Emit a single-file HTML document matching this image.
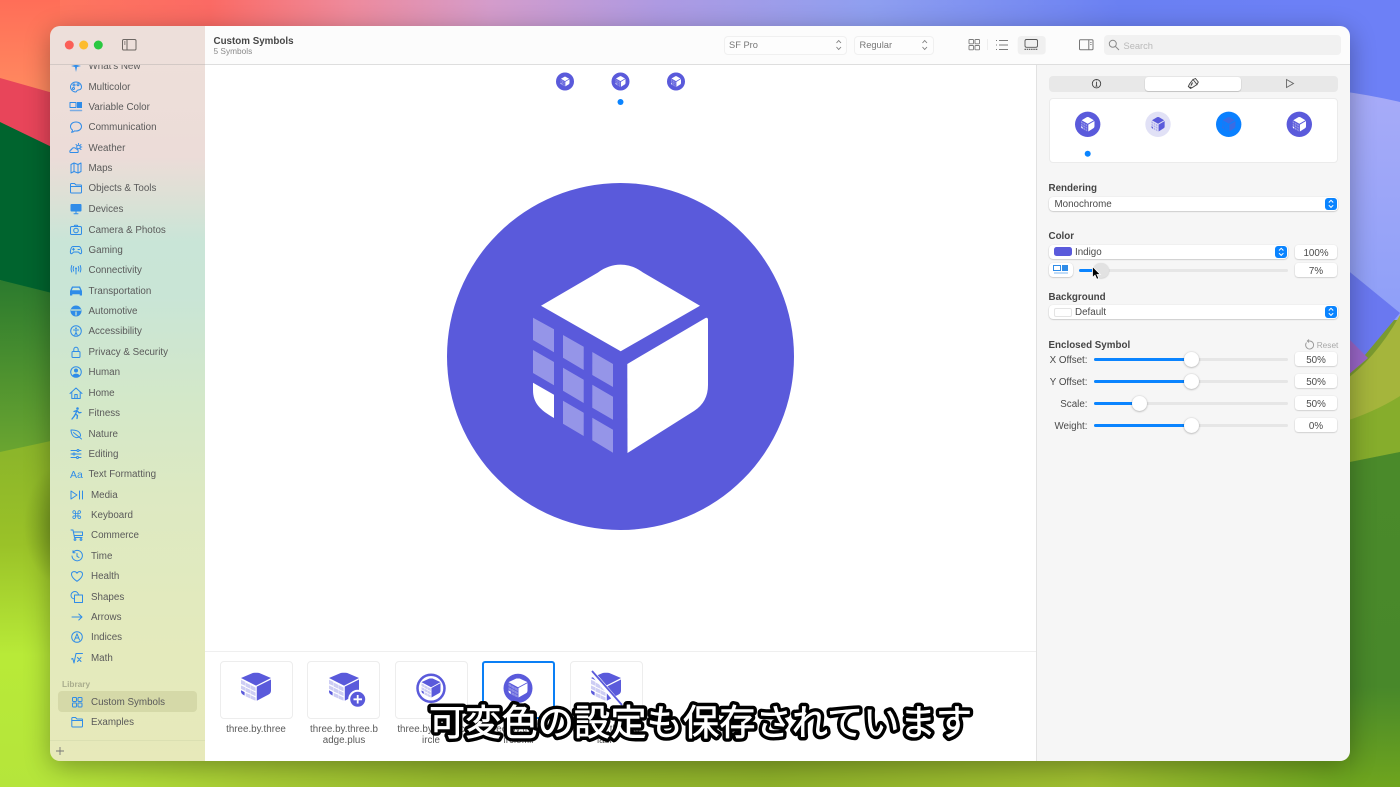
<!DOCTYPE html>
<html lang="ja"><head><meta charset="utf-8"><title>SF Symbols</title>
<style>
*{box-sizing:border-box}
html,body{margin:0;padding:0;width:1400px;height:787px;overflow:hidden;background:#7a9a30;font-family:"Liberation Sans","Noto Sans CJK JP",sans-serif}
.abs,.win div,.win span,.win svg{position:absolute}
.shadow{position:absolute;left:50px;top:26px;width:1300px;height:735px;border-radius:10px;box-shadow:0 6px 26px rgba(0,0,0,.32)}
.win{position:absolute;left:0;top:0;width:1400px;height:787px;clip-path:inset(26px 50px 26px 50px round 10px);font-size:9.8px;color:#4c4c4c;white-space:nowrap;filter:blur(.3px)}
.side{left:50px;top:26px;width:155px;height:735px;background:linear-gradient(180deg,#eee0da 0,#ecdcd8 130px,#dfe0d6 165px,#c9e5d7 215px,#c9e5d6 270px,#d4e8c8 380px,#dde9c2 470px,#e3eabd 600px,#e7e9ba 735px)}
.main{left:205px;top:26px;width:831px;height:735px;background:#fff}
.right{left:1036px;top:26px;width:314px;height:735px;background:#f6f6f6;border-left:1px solid #e2e2e2}
.head{left:205px;top:26px;width:1145px;height:39px;background:#fcfcfc;border-bottom:1px solid #dedede}
.shead{left:50px;top:26px;width:155px;height:39px;background:#eddfda;border-bottom:1px solid #d3c9c5}
.r{left:0;height:14px;width:205px;line-height:14px;color:#5a5a5a}
.r span{left:88.5px;top:1px}
.r.b span{left:91px}
.r svg{left:69px;top:0;width:14px;height:14px;fill:none;stroke:#2f8ce8;stroke-width:1;stroke-linecap:round;stroke-linejoin:round}
.r.b svg{left:70px}
.r svg .f{fill:#2f8ce8;stroke:none}
.lbl{font-weight:700;color:#454545;line-height:12px;left:1048.5px}
.pop{background:#fff;border-radius:4px;box-shadow:0 .5px 1.5px rgba(0,0,0,.28);height:14px;line-height:16px;color:#4a4a4a}
.blue{width:12px;height:12px;border-radius:3px;background:#0a84ff}
.fld{left:1295px;width:42px;height:14px;background:#fff;border-radius:3px;box-shadow:0 .5px 1.5px rgba(0,0,0,.25);text-align:center;line-height:17.5px;color:#4a4a4a}
.trk{height:3px;background:#e6e6e6;border-radius:2px}
.fil{height:3px;background:#0a84ff;border-radius:2px}
.th{width:15px;height:15px;border-radius:50%;background:#fff;box-shadow:0 .5px 2px rgba(0,0,0,.35)}
.rl{width:50px;text-align:right;left:1037.5px;line-height:12px;color:#4a4a4a}
.card{width:73px;height:58px;top:661px;border:1px solid #ededed;border-radius:4px;background:#fff}
.cap{width:90px;text-align:center;line-height:11.2px;color:#5a5a5a;top:723.5px;white-space:nowrap}
</style></head>
<body>
<svg class="abs" style="left:0;top:0" width="1400" height="787" viewBox="0 0 1400 787">
<defs>
<linearGradient id="top" x1="0" x2="1" y1="0" y2="0"><stop offset="0" stop-color="#ff7a5c"/><stop offset=".15" stop-color="#fb6a64"/><stop offset=".25" stop-color="#ee8a9c"/><stop offset=".35" stop-color="#d49ccb"/><stop offset=".47" stop-color="#ae9ae2"/><stop offset=".62" stop-color="#8f9ff0"/><stop offset=".8" stop-color="#6a80f2"/><stop offset="1" stop-color="#6d80f8"/></linearGradient>
<linearGradient id="org" x1="0" x2="0" y1="0" y2="1"><stop offset="0" stop-color="#ff6e58"/><stop offset="1" stop-color="#ff8c60"/></linearGradient>
<linearGradient id="mid" x1="0" x2="0" y1="0" y2="1"><stop offset="0" stop-color="#2b7a2e"/><stop offset="1" stop-color="#6aa530"/></linearGradient>
<linearGradient id="yg" x1="0" x2="0" y1="0" y2="1"><stop offset="0" stop-color="#8ab42a"/><stop offset=".3" stop-color="#9ac228"/><stop offset=".62" stop-color="#b8ea38"/><stop offset="1" stop-color="#b5e53b"/></linearGradient>
<linearGradient id="bot" x1="0" x2="1" y1="0" y2="0"><stop offset="0" stop-color="#b6e63a"/><stop offset=".15" stop-color="#a8cc34"/><stop offset=".3" stop-color="#98bb2e"/><stop offset=".55" stop-color="#8fb22a"/><stop offset=".8" stop-color="#a0bf30"/><stop offset="1" stop-color="#6ca51f"/></linearGradient>
<linearGradient id="per" x1="0" x2="0" y1="0" y2="1"><stop offset="0" stop-color="#a7abf8"/><stop offset="1" stop-color="#8e9ff8"/></linearGradient>
<linearGradient id="gr" x1="0" x2="0" y1="0" y2="1"><stop offset="0" stop-color="#4a8a2a"/><stop offset=".7" stop-color="#48882a"/><stop offset="1" stop-color="#6fa51e"/></linearGradient>
<radialGradient id="dk"><stop offset="0" stop-color="#6d8f1e" stop-opacity=".9"/><stop offset="1" stop-color="#6d8f1e" stop-opacity="0"/></radialGradient>
</defs>
<rect width="1400" height="100" fill="url(#top)"/>
<rect x="0" y="0" width="60" height="100" fill="url(#org)"/>
<rect x="0" y="440" width="100" height="347" fill="url(#yg)"/>
<ellipse cx="62" cy="525" rx="38" ry="60" fill="url(#dk)"/>
<polygon points="0,78 60,95 60,152 0,122" fill="#e8455a"/>
<polygon points="0,122 60,151 60,300 0,280" fill="#00642e"/>
<polygon points="0,280 60,295 60,439 0,452" fill="url(#mid)"/>
<rect x="1340" y="0" width="60" height="110" fill="#6d80f6"/>
<path d="M1340 91 Q1370 95 1400 102 V320 H1340Z" fill="url(#per)"/>
<polygon points="1340,264 1400,313 1340,385" fill="#6a78f0"/>
<polygon points="1340,330 1368,358 1340,382" fill="#9a66c8"/>
<path d="M1340 384 Q1375 360 1400 315 V400 L1340 425Z" fill="#a5b53c"/>
<path d="M1340 423 Q1375 412 1400 396 V452 L1340 464Z" fill="#86ad2c"/>
<path d="M1340 464 L1400 452 V787 H1340Z" fill="url(#gr)"/>
<rect x="60" y="755" width="1290" height="32" fill="url(#bot)"/>
<symbol id="cube" viewBox="533 264 175 189">
<path d="M541 305.7 L598 272.5 C612 262 629 262 643 272.5 L700 305.7 L620.7 351.3Z"/>
<path d="M627.3 364 L705.5 318 Q708 317 708 320 V385 Q708 402 694 411 L627.5 453Z"/>
<path d="M533 382.7 L554 394.7 V418 C540 410 533 403 533 390Z"/>
<g opacity=".36">
<path d="M533 317.7 L554 329.3 V352.3 L533 340Z"/><path d="M533 350 L554 362 V385.3 L533 373Z"/>
<path d="M563 335 L583.7 346.7 V370 L563 357.7Z"/><path d="M563 367.7 L583.7 379.7 V403 L563 390.7Z"/><path d="M563 400.7 L583.7 412.7 V436 L563 423.7Z"/>
<path d="M592.3 352 L613 364 V387 L592.3 375Z"/><path d="M592.3 384.7 L613 396.7 V419.7 L592.3 407.7Z"/><path d="M592.3 417.7 L613 429.7 V452.7 L592.3 440.3Z"/>
</g>
</symbol>
<symbol id="cub2" viewBox="533 264 175 189" preserveAspectRatio="none">
<path d="M533 300 L598 268 C612 260 629 260 643 268 L708 300 L620.7 351Z"/>
<path d="M625 358 L708 310 V385 Q708 402 694 411 L625 453Z"/>
<path d="M533 382.7 L554 394.7 V418 C540 410 533 403 533 390Z"/>
<g opacity=".3">
<path d="M533 312 L558 326 V352 L533 340Z"/><path d="M533 350 L558 362 V387 L533 373Z"/>
<path d="M560 330 L588 346 V372 L560 357Z"/><path d="M560 365 L588 380 V405 L560 391Z"/><path d="M560 400 L588 413 V438 L560 424Z"/>
<path d="M590 348 L618 364 V390 L590 375Z"/><path d="M590 382 L618 398 V422 L590 408Z"/><path d="M590 416 L618 431 V453 L590 440Z"/>
</g>
</symbol>
</svg>
<div class="shadow"></div>
<div class="win">
<div class="side"></div><div class="main"></div><div class="right"></div>

<div class="r" style="top:59px"><svg viewBox="0 0 14 14"><path class="f" d="M7 1 8 6 12 7 8 8 7 13 6 8 2 7 6 6Z"/></svg><span>What's New</span></div>
<div class="r" style="top:79.5px"><svg viewBox="0 0 14 14"><path d="M7 2C3.5 2 1.5 4.5 1.5 7S4 12 6.5 12C8 12 7.5 10.5 8.5 10.2 10 9.8 12.5 10 12.5 7 12.5 4 10 2 7 2Z"/><circle cx="5" cy="5" r="1"/><circle cx="9" cy="4.8" r="1"/><circle cx="4.5" cy="8.5" r="1"/></svg><span>Multicolor</span></div>
<div class="r" style="top:99.7px"><svg viewBox="0 0 14 14"><rect x="1" y="2.5" width="6" height="5"/><rect class="f" x="8" y="2" width="5" height="6"/><path d="M1.5 10.5H12.5" stroke-width="1.5" opacity=".6"/></svg><span>Variable Color</span></div>
<div class="r" style="top:120px"><svg viewBox="0 0 14 14"><path d="M7 2C3.7 2 1.5 4 1.5 6.5 1.5 8 2.3 9.2 3.5 10 3.5 11 3 11.8 2.5 12.3 4 12.3 5 11.5 5.6 10.9 6 11 6.5 11 7 11 10.3 11 12.5 9 12.5 6.5S10.3 2 7 2Z"/></svg><span>Communication</span></div>
<div class="r" style="top:140.5px"><svg viewBox="0 0 14 14"><path d="M1.5 11.5C.5 11.5.5 9 2.5 8.8 3 6.5 6 6 7.3 8 9 8 9.5 10 9 11.5Z"/><circle cx="9.5" cy="6" r="1.8"/><path d="M9.5 2.5V3.3M12.8 6H12M12 3.5L11.3 4.2M12 8.5L11.3 7.8M7 3.5L7.7 4.2"/></svg><span>Weather</span></div>
<div class="r" style="top:161px"><svg viewBox="0 0 14 14"><path d="M2 3.5 5 2 9 3.5 12 2V10.5L9 12 5 10.5 2 12Z"/><path d="M5 2V10.5M9 3.5V12"/></svg><span>Maps</span></div>
<div class="r" style="top:181px"><svg viewBox="0 0 14 14"><path d="M1.5 3.5Q1.5 2.5 2.5 2.5H5.5L7 4H12Q12.5 4 12.5 5V11Q12.5 12 11.5 12H2.5Q1.5 12 1.5 11Z"/><path d="M1.5 5.5H12.5"/></svg><span>Objects &amp; Tools</span></div>
<div class="r" style="top:202px"><svg viewBox="0 0 14 14"><rect class="f" x="1.5" y="2" width="11" height="7.5" rx="1"/><path d="M5 11.8H9M7 9.5V11.8"/></svg><span>Devices</span></div>
<div class="r" style="top:222.5px"><svg viewBox="0 0 14 14"><rect x="1.5" y="3.5" width="11" height="8" rx="1.3"/><path d="M5 3.5 5.7 2.3H8.3L9 3.5"/><circle cx="7" cy="7.5" r="2.3"/></svg><span>Camera &amp; Photos</span></div>
<div class="r" style="top:243px"><svg viewBox="0 0 14 14"><path d="M4 3.5H10C11.5 3.5 12 5 12.5 7.5 13 10.5 12 11 11 10.5L9.3 9H4.7L3 10.5C2 11 1 10.5 1.5 7.5 2 5 2.5 3.5 4 3.5Z"/><path d="M3.5 6.2H5.5M4.5 5.2V7.2M9 6.5H10.5"/></svg><span>Gaming</span></div>
<div class="r" style="top:263px"><svg viewBox="0 0 14 14"><path d="M7 5V11"/><circle class="f" cx="7" cy="5.5" r="1"/><path d="M4.7 3.5C4 5 4 6.5 4.7 8M9.3 3.5C10 5 10 6.5 9.3 8M2.8 2.5C1.8 5 1.8 6.8 2.8 9M11.2 2.5C12.2 5 12.2 6.8 11.2 9"/></svg><span>Connectivity</span></div>
<div class="r" style="top:283.5px"><svg viewBox="0 0 14 14"><path class="f" d="M3 2.5H11L13 7V11.5H10.7V10.3H3.3V11.5H1V7Z"/><path d="M3.9 3.8H10.1L11.2 6.3H2.8Z" stroke="none" style="fill:#cfe8d8"/></svg><span>Transportation</span></div>
<div class="r" style="top:304px"><svg viewBox="0 0 14 14"><circle class="f" cx="7" cy="7" r="5.5"/><path d="M2.5 6H11.5M7 8V11" stroke="#d4e9d0" stroke-width="1.2"/></svg><span>Automotive</span></div>
<div class="r" style="top:324px"><svg viewBox="0 0 14 14"><circle cx="7" cy="7" r="5.3"/><circle class="f" cx="7" cy="4.3" r=".9"/><path d="M4.5 6H9.5M7 6V8.5L5.8 11M7 8.5L8.2 11"/></svg><span>Accessibility</span></div>
<div class="r" style="top:344.5px"><svg viewBox="0 0 14 14"><rect x="3" y="6.5" width="8" height="6" rx="1"/><path d="M4.8 6.5V4.5C4.8 1.5 9.2 1.5 9.2 4.5V6.5"/></svg><span>Privacy &amp; Security</span></div>
<div class="r" style="top:365px"><svg viewBox="0 0 14 14"><circle cx="7" cy="7" r="5.3"/><circle class="f" cx="7" cy="5.5" r="2"/><path class="f" d="M3.5 10.5C4.5 8 9.5 8 10.5 10.5 9 12.5 5 12.5 3.5 10.5Z"/></svg><span>Human</span></div>
<div class="r" style="top:385.5px"><svg viewBox="0 0 14 14"><path d="M1 7.5 7 2 13 7.5M2.8 6.5V12.5H11.2V6.5M5.8 12.5V8.5H8.2V12.5"/></svg><span>Home</span></div>
<div class="r" style="top:406px"><svg viewBox="0 0 14 14"><circle class="f" cx="8.5" cy="2.5" r="1.3"/><path stroke-width="1.3" d="M8 4.5 6.5 8 8.5 9.5 8 12.5M6.5 8 5 10.5 3 13M5 5.5 8 4.5 10 6.8 12 6.5"/></svg><span>Fitness</span></div>
<div class="r" style="top:426.5px"><svg viewBox="0 0 14 14"><path d="M2 3C2 3 2 9.5 7 10.5 10 11 11.5 9 11.5 9 11.5 9 12 5.5 8 3.8 5.5 2.8 2 3 2 3Z"/><path d="M4.5 5.5 12.5 12"/></svg><span>Nature</span></div>
<div class="r" style="top:447px"><svg viewBox="0 0 14 14"><path d="M2 3.5H12M2 7H12M2 10.5H12"/><circle cx="9" cy="3.5" r="1" fill="#dde9c2"/><circle cx="5" cy="7" r="1" fill="#dde9c2"/><circle cx="8.5" cy="10.5" r="1" fill="#dde9c2"/></svg><span>Editing</span></div>
<div class="r" style="top:467px"><span style="left:70px;color:#2f8ce8;font-size:10.5px">Aa</span><span>Text Formatting</span></div>
<div class="r b" style="top:487.5px"><svg viewBox="0 0 14 14" style="left:69.5px"><path d="M1 3V11L7 7Z"/><path d="M9.5 3V11M12.5 3V11"/></svg><span>Media</span></div>
<div class="r b" style="top:508px"><span style="left:71px;color:#2f8ce8;font-size:11.5px;font-family:'DejaVu Sans',sans-serif;top:0">⌘</span><span>Keyboard</span></div>
<div class="r b" style="top:528px"><svg viewBox="0 0 14 14"><path d="M1 2H3L4.5 9.5H12M3.3 4H12.5V7.5H4"/><circle cx="5" cy="11.5" r=".9"/><circle cx="11" cy="11.5" r=".9"/></svg><span>Commerce</span></div>
<div class="r b" style="top:549px"><svg viewBox="0 0 14 14"><path d="M3 3.5A5.2 5.2 0 1 1 2 7"/><path d="M3 1.8V3.8H5M7 4.5V7.3L9 8.5"/></svg><span>Time</span></div>
<div class="r b" style="top:569px"><svg viewBox="0 0 14 14"><path d="M7 12.3C3 9.5 1.5 7.5 1.5 5.2 1.5 2.5 5.5 1.5 7 4.2 8.5 1.5 12.5 2.5 12.5 5.2 12.5 7.5 11 9.5 7 12.3Z"/></svg><span>Health</span></div>
<div class="r b" style="top:589.5px"><svg viewBox="0 0 14 14"><rect x="4.5" y="5" width="8" height="7.5"/><path d="M4.5 9C2.5 8.8 1 7.3 1 5.3 1 3.2 2.8 1.5 5 1.5 6.8 1.5 8.2 3 8.5 5"/></svg><span>Shapes</span></div>
<div class="r b" style="top:610px"><svg viewBox="0 0 14 14"><path d="M2 7H12M8.8 4 12 7 8.8 10"/></svg><span>Arrows</span></div>
<div class="r b" style="top:630px"><svg viewBox="0 0 14 14"><circle cx="7" cy="7" r="5.3"/><path d="M4.5 10 7 3.8 9.5 10M5.4 8H8.6"/></svg><span>Indices</span></div>
<div class="r b" style="top:651px"><svg viewBox="0 0 14 14"><path d="M1.5 8 2.8 7.5 4 12 6 2.5H12.5M7.5 6.5 11 10.5M11 6.5 7.5 10.5"/></svg><span>Math</span></div>
<div style="left:62px;top:679px;font-size:8.3px;line-height:11px;font-weight:700;color:#a9ad8d">Library</div>
<div style="left:58px;top:691px;width:139px;height:21px;border-radius:4px;background:#d5d9a8"></div>
<div class="r b" style="top:694.5px"><svg viewBox="0 0 14 14"><rect x="2.5" y="2.5" width="4" height="4" rx=".7"/><rect x="8" y="2.5" width="4" height="4" rx=".7"/><rect x="2.5" y="8" width="4" height="4" rx=".7"/><rect x="8" y="8" width="4" height="4" rx=".7"/></svg><span>Custom Symbols</span></div>
<div class="r b" style="top:715px"><svg viewBox="0 0 14 14"><path d="M1.8 3.5Q1.8 2.5 2.8 2.5H5.5L7 4H12Q12.5 4 12.5 5V11Q12.5 12 11.5 12H2.8Q1.8 12 1.8 11Z"/><path d="M1.8 5.5H12.5"/></svg><span>Examples</span></div>
<div style="left:50px;top:740px;width:155px;height:1px;background:#dbe0b2"></div>
<svg style="left:55px;top:746px" width="10" height="10" viewBox="0 0 10 10"><path d="M5 1V9M1 5H9" stroke="#777" stroke-width=".9"/></svg>

<div class="shead"></div><div class="head"></div>
<svg style="left:60px;top:36px" width="82" height="18" viewBox="60 36 82 18" fill="none"><circle cx="69.3" cy="45" r="4.5" fill="#fb5f57"/><circle cx="83.7" cy="45" r="4.5" fill="#fdbc2e"/><circle cx="98.3" cy="45" r="4.5" fill="#2ac840"/><rect x="122.5" y="39.5" width="13.5" height="10.5" rx="1.3" stroke="#6d6763"/><path d="M127 39.5V50M124 42H125.5M124 44H125.5" stroke="#6d6763"/></svg>
<div style="left:213.5px;top:36px;font-weight:700;color:#474747;line-height:12px">Custom Symbols</div>
<div style="left:213.5px;top:46px;font-size:8.3px;color:#8a8a8a;line-height:10px">5 Symbols</div>

<div style="left:723.5px;top:35.5px;width:123px;height:19px;border:1px solid #f0f0f0;border-radius:4px;background:#fdfdfd"></div>
<div style="left:729px;top:38.5px;line-height:12px;font-size:9.3px;color:#777">SF Pro</div>
<div style="left:853.5px;top:35.5px;width:80px;height:19px;border:1px solid #f0f0f0;border-radius:4px;background:#fdfdfd"></div>
<div style="left:859.5px;top:38.5px;line-height:12px;font-size:9.3px;color:#777">Regular</div>
<svg style="left:700px;top:28px" width="350" height="36" viewBox="700 28 350 36" fill="none" stroke="#7c7c7c" stroke-width=".9">
<path d="M836.5 43 838.7 40.5 841 43M836.5 47 838.7 49.5 841 47M922.5 43 924.7 40.5 927 43M922.5 47 924.7 49.5 927 47"/>
<rect x="969" y="39.5" width="4.5" height="4.3" rx=".6"/><rect x="975" y="39.5" width="4.5" height="4.3" rx=".6"/><rect x="969" y="45.5" width="4.5" height="4.3" rx=".6"/><rect x="975" y="45.5" width="4.5" height="4.3" rx=".6"/>
<path d="M987.5 39V50" stroke="#ececec"/>
<path d="M999 40.5H1008M999 45H1008M999 49.5H1008M996 40.5H997M996 45H997M996 49.5H997"/>
<rect x="1017.7" y="36" width="28" height="18.5" rx="3.5" fill="#f0f0f0" stroke="none"/>
<rect x="1025" y="39.5" width="12.5" height="7.8" rx="1.5" stroke="#555"/><path d="M1024.5 49.3H1038" stroke="#555" stroke-width="1.2" stroke-dasharray="1.5 .7"/>
</svg>
<svg style="left:1070px;top:30px" width="60" height="30" viewBox="1070 30 60 30" fill="none" stroke="#767676"><rect x="1079.5" y="39.8" width="13.5" height="10" rx="1"/><path d="M1088.8 39.8V49.8M1090.3 42.5H1091.5M1090.3 44.5H1091.5" /></svg>
<div style="left:1104px;top:35px;width:237px;height:20px;border-radius:4px;background:#f1f1f1"></div>
<svg style="left:1108px;top:39px" width="12" height="12" viewBox="0 0 12 12" fill="none" stroke="#8a8a8a"><circle cx="4.8" cy="4.8" r="3.5"/><path d="M7.5 7.5 11 11"/></svg>
<div style="left:1123.5px;top:40px;line-height:12px;font-size:9.3px;color:#b9b9b9">Search</div>

<!-- top thumbs -->
<svg style="left:205px;top:65px" width="831" height="465" viewBox="205 65 831 465">
<circle cx="565" cy="81.5" r="9" fill="#5a5adb"/><circle cx="620.5" cy="81.5" r="9" fill="#5a5adb"/><circle cx="676" cy="81.5" r="9" fill="#5a5adb"/>
<use href="#cube" x="560.5" y="76.5" width="9" height="10" fill="#fff"/><use href="#cube" x="615.5" y="76" width="10" height="11" fill="#fff"/><use href="#cube" x="671" y="76" width="10" height="11" fill="#fff"/>
<circle cx="620.5" cy="102" r="3" fill="#0a84ff"/>
<circle cx="620.5" cy="356.5" r="173.5" fill="#5a5adb"/>
<use href="#cube" x="533" y="264" width="175" height="189" fill="#fff"/>
</svg>

<!-- gallery -->
<div style="left:205px;top:651px;width:831px;height:1px;background:#efefef"></div>
<div class="card" style="left:219.5px"></div><div class="card" style="left:307px"></div><div class="card" style="left:394.5px"></div>
<div class="card" style="left:482px;border:2.5px solid #0a7ff5;border-radius:3px"></div><div class="card" style="left:569.5px"></div>
<svg style="left:205px;top:660px" width="450" height="60" viewBox="205 660 450 60" fill="#5a5adb">
<use href="#cub2" x="241" y="672.7" width="30" height="28"/>
<use href="#cub2" x="329" y="672.7" width="30" height="28"/>
<circle cx="357.7" cy="699.3" r="9.5" fill="#fff"/><circle cx="357.7" cy="699.3" r="7.5"/><path d="M353.5 699.3H362M357.7 695V703.5" stroke="#fff" stroke-width="1.8"/>
<circle cx="431" cy="688.3" r="13.5" fill="none" stroke="#5a5adb" stroke-width="2.5"/><use href="#cub2" x="421.5" y="678.5" width="19" height="19"/>
<circle cx="518" cy="688.3" r="14.5"/><use href="#cub2" x="508.5" y="678.5" width="19" height="19" fill="#fff"/>
<use href="#cub2" x="591" y="672.7" width="30" height="28"/><path d="M590 670 621 706" stroke="#fff" stroke-width="5"/><path d="M592 671 622 705" stroke="#5a5adb" stroke-width="1.8"/>
</svg>
<div class="cap" style="left:211px">three.by.three</div>
<div class="cap" style="left:299px">three.by.three.b<br>adge.plus</div>
<div class="cap" style="left:386px">three.by.three.c<br>ircle</div>
<div class="cap" style="left:473.5px">three.by.three.c<br>ircle.fill</div>
<div class="cap" style="left:561px">three.by.three.s<br>lash</div>

<!-- right panel -->
<div style="left:1048.7px;top:76px;width:289px;height:16px;border-radius:4px;background:#e8e8e8"></div>
<div style="left:1145px;top:76.7px;width:96px;height:14.5px;border-radius:3px;background:#fff;box-shadow:0 .5px 1px rgba(0,0,0,.3)"></div>
<svg style="left:1085px;top:75px" width="215" height="18" viewBox="1085 75 215 18" fill="none" stroke="#444" stroke-width=".9"><circle cx="1096.5" cy="83.7" r="4.2"/><path d="M1096.5 82V86.2M1095.5 86.2H1097.5M1096.5 80.8V81.3"/><path d="M1193 79.5 1195.5 78.5 1198.3 82 1197 84.5ZM1193 79.5 1197 84.5 1192.5 87.5 1190.5 88.5 1188.3 86.5 1189.5 84Z" fill="#f4f4f4"/><path d="M1191 85.5 1192.5 82.5M1189.5 87 1191.5 87.8" stroke-width="1.2"/><path d="M1286.5 79.5V87.5L1293.5 83.5Z" stroke="#666"/></svg>
<div style="left:1048.7px;top:98px;width:289px;height:64.5px;border-radius:4px;background:#fff;border:1px solid #ebebeb"></div>
<svg style="left:1050px;top:100px" width="286" height="60" viewBox="1050 100 286 60">
<circle cx="1087.7" cy="124.3" r="12.7" fill="#5a5adb"/><use href="#cube" x="1081" y="117" width="13.5" height="14.5" fill="#fff"/>
<circle cx="1158" cy="124.3" r="12.7" fill="#e1e1f6"/><use href="#cube" x="1151.3" y="117" width="13.5" height="14.5" fill="#5a5adb"/>
<circle cx="1228.7" cy="124.3" r="12.7" fill="#0a80ff"/><use href="#cube" x="1222" y="117" width="13.5" height="14.5" fill="#3a6ce4"/>
<circle cx="1299.3" cy="124.3" r="12.7" fill="#5a5adb"/><use href="#cube" x="1292.6" y="117" width="13.5" height="14.5" fill="#fff"/>
<circle cx="1087.7" cy="153.7" r="3" fill="#0a84ff"/>
</svg>

<div class="lbl" style="top:183.3px">Rendering</div>
<div class="pop" style="left:1049px;top:197px;width:289px"><span style="left:5.5px">Monochrome</span></div>
<div class="blue" style="left:1325px;top:198px"></div>
<div class="lbl" style="top:231.3px">Color</div>
<div class="pop" style="left:1049px;top:245px;width:239px"><span style="left:26px">Indigo</span></div>
<div style="left:1054px;top:247.3px;width:18px;height:9px;border-radius:2.5px;background:#5a5adb"></div>
<div class="blue" style="left:1275px;top:246px"></div>
<div class="fld" style="top:245px">100%</div>
<div class="pop" style="left:1049px;top:263px;width:24px"></div>
<svg style="left:1053px;top:265px" width="16" height="10" viewBox="0 0 16 10" fill="none" stroke="#2f8ce8"><rect x=".5" y=".5" width="7" height="5"/><rect x="9" y="0" width="6" height="6" fill="#2f8ce8" stroke="none"/><path d="M1 8H15" opacity=".6"/></svg>
<div class="trk" style="left:1079.3px;top:268.5px;width:209px"></div>
<div class="fil" style="left:1079.3px;top:268.5px;width:19px"></div>
<div style="left:1093px;top:262.5px;width:15.5px;height:15.5px;border-radius:50%;background:#e2e2e2;box-shadow:0 .5px 1.5px rgba(0,0,0,.2)"></div>
<div class="fld" style="top:263px">7%</div>
<div class="lbl" style="top:292.3px">Background</div>
<div class="pop" style="left:1049px;top:305px;width:289px"><span style="left:26px">Default</span></div>
<div style="left:1054px;top:308px;width:18px;height:9px;border-radius:2px;background:#fff;border:1px solid #e4e4e4"></div>
<div class="blue" style="left:1325px;top:306px"></div>
<div class="lbl" style="top:340.2px">Enclosed Symbol</div>
<svg style="left:1304px;top:339px" width="11" height="11" viewBox="0 0 11 11" fill="none" stroke="#9a9a9a" stroke-width=".9"><path d="M2.5 3.5A4 4 0 1 0 5.5 2H3.5M5 .5 3.3 2 5 3.5"/></svg>
<div style="left:1316.7px;top:339px;line-height:12px;font-size:8.3px;color:#a8a8a8">Reset</div>

<div class="rl" style="top:355.3px">X Offset:</div><div class="trk" style="left:1094px;top:358px;width:194px"></div><div class="fil" style="left:1094px;top:358px;width:97px"></div><div class="th" style="left:1183.5px;top:352px"></div><div class="fld" style="top:352.3px">50%</div>
<div class="rl" style="top:377.3px">Y Offset:</div><div class="trk" style="left:1094px;top:380px;width:194px"></div><div class="fil" style="left:1094px;top:380px;width:97px"></div><div class="th" style="left:1183.5px;top:374px"></div><div class="fld" style="top:374.3px">50%</div>
<div class="rl" style="top:399.3px">Scale:</div><div class="trk" style="left:1094px;top:402px;width:194px"></div><div class="fil" style="left:1094px;top:402px;width:45px"></div><div class="th" style="left:1131.5px;top:396px"></div><div class="fld" style="top:396.3px">50%</div>
<div class="rl" style="top:421.3px">Weight:</div><div class="trk" style="left:1094px;top:424px;width:194px"></div><div class="fil" style="left:1094px;top:424px;width:97px"></div><div class="th" style="left:1183.5px;top:418px"></div><div class="fld" style="top:418.3px">0%</div>

<svg style="left:1270px;top:195px" width="70" height="125" viewBox="1270 195 70 125" fill="none" stroke="#fff" stroke-width="1">
<path d="M1328.8 202.5 1331 200.3 1333.2 202.5M1328.8 205.2 1331 207.4 1333.2 205.2"/>
<path d="M1279 250.5 1281.2 248.3 1283.4 250.5M1279 253.2 1281.2 255.4 1283.4 253.2"/>
<path d="M1328.8 310.5 1331 308.3 1333.2 310.5M1328.8 313.2 1331 315.4 1333.2 313.2"/>
</svg>
<svg style="left:1090px;top:265px" width="12" height="16" viewBox="0 0 12 16"><path d="M2.5 1.5V12.5L5 10.2 6.8 14.3 8.8 13.4 7 9.5H10.3Z" fill="#000" stroke="#fff" stroke-width=".8"/></svg>
</div>

<svg class="abs" style="left:0;top:0;pointer-events:none;filter:blur(.3px)" width="1400" height="787" viewBox="0 0 1400 787" font-family="'Noto Sans CJK JP',sans-serif" font-size="36" stroke-linejoin="round">
<text x="429" y="735" fill="#000" stroke="#000" stroke-width="7.5" textLength="543">可変色の設定も保存されています</text>
<text x="429" y="735" fill="#fff" stroke="#fff" stroke-width=".6" textLength="543">可変色の設定も保存されています</text>
</svg>
</body></html>
